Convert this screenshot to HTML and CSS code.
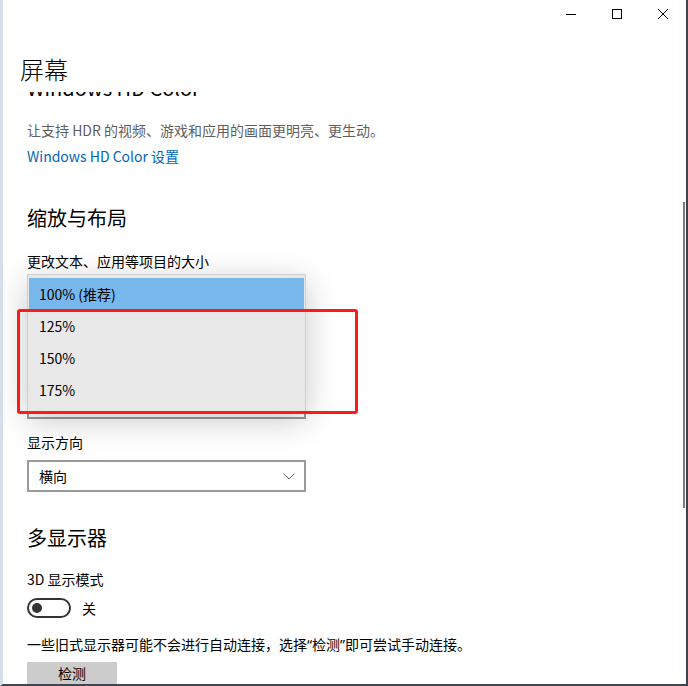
FILE: index.html
```html
<!DOCTYPE html>
<html lang="zh-CN">
<head>
    <meta charset="UTF-8">
    <title>屏幕</title>
    <link rel="stylesheet" href="styles.css">
</head>
<body>
    <div class="window">
        <div class="titlebar">
            <div class="caption-btn">
                <svg width="10" height="10" viewBox="0 0 10 10"><path d="M0 5.5h10" stroke="#000" stroke-width="1"/></svg>
            </div>
            <div class="caption-btn">
                <svg width="10" height="10" viewBox="0 0 10 10"><rect x="0.5" y="0.5" width="9" height="9" fill="none" stroke="#000" stroke-width="1"/></svg>
            </div>
            <div class="caption-btn">
                <svg width="10" height="10" viewBox="0 0 10 10"><path d="M0 0L10 10M10 0L0 10" stroke="#000" stroke-width="1"/></svg>
            </div>
        </div>

        <h1 class="page-title">屏幕</h1>

        <div class="content">
            <h2 class="subtitle clipped">Windows HD Color</h2>
            <p class="desc">让支持 HDR 的视频、游戏和应用的画面更明亮、更生动。</p>
            <a class="link" href="#">Windows HD Color 设置</a>

            <h2 class="subtitle section">缩放与布局</h2>
            <div class="label">更改文本、应用等项目的大小</div>
            <div class="combo"><span>100% (推荐)</span></div>
            <a class="link after-combo" href="#">高级缩放设置</a>
            <div class="label spaced">显示分辨率</div>
            <div class="combo"><span>1920 × 1080 (推荐)</span></div>

            <div class="label after-combo">显示方向</div>
            <div class="combo">
                <span>横向</span>
                <svg class="chevron" width="12" height="7" viewBox="0 0 12 7"><path d="M0.5 0.5L6 6L11.5 0.5" fill="none" stroke="#666" stroke-width="1"/></svg>
            </div>

            <h2 class="subtitle section-2">多显示器</h2>
            <div class="label mid">3D 显示模式</div>
            <div class="toggle-row">
                <div class="toggle"><div class="knob"></div></div>
                <span>关</span>
            </div>
            <p class="text">一些旧式显示器可能不会进行自动连接，选择<span class="q">“</span>检测<span class="q">”</span>即可尝试手动连接。</p>
            <button class="btn">检测</button>

            <!-- open dropdown of the scale combo -->
            <div class="popup">
                <div class="item selected">100% (推荐)</div>
                <div class="item">125%</div>
                <div class="item">150%</div>
                <div class="item">175%</div>
            </div>
            <div class="mark"></div>
            <div class="scroll-thumb"></div>
        </div>
    </div>
</body>
</html>
```

FILE: styles.css
```css
html, body {
    margin: 0;
    padding: 0;
}

body {
    width: 688px;
    height: 686px;
    overflow: hidden;
    background: #fff;
    font-family: "Noto Sans CJK SC", "Noto Sans", sans-serif;
    font-size: 14px;
    color: #000;
}

.window {
    box-sizing: border-box;
    width: 688px;
    height: 686px;
    display: flex;
    flex-direction: column;
    background: #fff;
    border-left: 3px solid #d5dfeb;
    border-right: 2px solid #3c434d;
    border-bottom: 2px solid #3f4650;
}

.titlebar {
    height: 28px;
    display: flex;
    justify-content: flex-end;
    flex: none;
}

.caption-btn {
    width: 46px;
    height: 28px;
    display: flex;
    align-items: center;
    justify-content: center;
}

.page-title {
    margin: 25px 0 7px;
    padding-left: 17px;
    font-size: 24px;
    line-height: 32px;
    font-weight: 300;
    flex: none;
}

.content {
    position: relative;
    flex: 1;
    min-height: 0;
    overflow: hidden;
    padding-left: 24px;
}

.subtitle {
    margin: 0;
    font-size: 20px;
    line-height: 28px;
    font-weight: normal;
}

.clipped { margin-top: -18px; }
.section { margin-top: 38px; }
.section-2 { margin-top: 32px; }

.desc {
    margin: 18px 0 0;
    line-height: 20px;
    color: #5e5e5e;
}

.link {
    display: block;
    width: max-content;
    margin-top: 6px;
    line-height: 20px;
    color: #0067b8;
    text-decoration: none;
}

.label {
    margin-top: 19px;
    line-height: 20px;
}

.label.mid { margin-top: 17px; }
.label.spaced { margin-top: 18px; }
.link.after-combo { margin-top: 10px; }
.label.after-combo { margin-top: 13px; }

.combo {
    box-sizing: border-box;
    width: 279px;
    height: 32px;
    margin-top: 8px;
    padding: 0 9px 0 10px;
    border: 2px solid #999;
    display: flex;
    align-items: center;
    justify-content: space-between;
    line-height: 20px;
}

.toggle-row {
    margin-top: 9px;
    display: flex;
    align-items: center;
    gap: 11px;
    height: 20px;
}

.toggle {
    box-sizing: border-box;
    width: 44px;
    height: 20px;
    border: 2px solid #333;
    border-radius: 10px;
    display: flex;
    align-items: center;
    padding-left: 3px;
}

.knob {
    width: 10px;
    height: 10px;
    border-radius: 50%;
    background: #333;
}

.text {
    margin: 16px 0 0;
    line-height: 20px;
}

.q {
    font-family: "Noto Sans", sans-serif;
}

.btn {
    display: block;
    box-sizing: border-box;
    margin-top: 7px;
    width: 90px;
    height: 32px;
    border: none;
    background: #ccc;
    font-family: inherit;
    font-size: 14px;
    line-height: 20px;
    color: #000;
    padding: 1px 0 0;
    text-align: center;
    vertical-align: top;
    display: flex;
    align-items: flex-start;
    justify-content: center;
}

.popup {
    position: absolute;
    left: 24px;
    top: 182px;
    box-sizing: border-box;
    width: 279px;
    height: 138px;
    padding: 3px 1px 0 1px;
    border: 1px solid #cfcfcf;
    background: #e8e8e8;
    box-shadow: 0 8px 30px rgba(0, 0, 0, 0.22);
}

.item {
    height: 32px;
    padding-left: 10px;
    display: flex;
    align-items: center;
    line-height: 20px;
}

.item.selected {
    background: #78b7ec;
}

.mark {
    position: absolute;
    left: 14px;
    top: 217px;
    box-sizing: border-box;
    width: 341px;
    height: 105px;
    border: 3px solid #ff1a1a;
    border-radius: 3px;
}

.scroll-thumb {
    position: absolute;
    right: 1px;
    top: 110px;
    width: 2px;
    height: 306px;
    background: #7c7c7c;
}
```
